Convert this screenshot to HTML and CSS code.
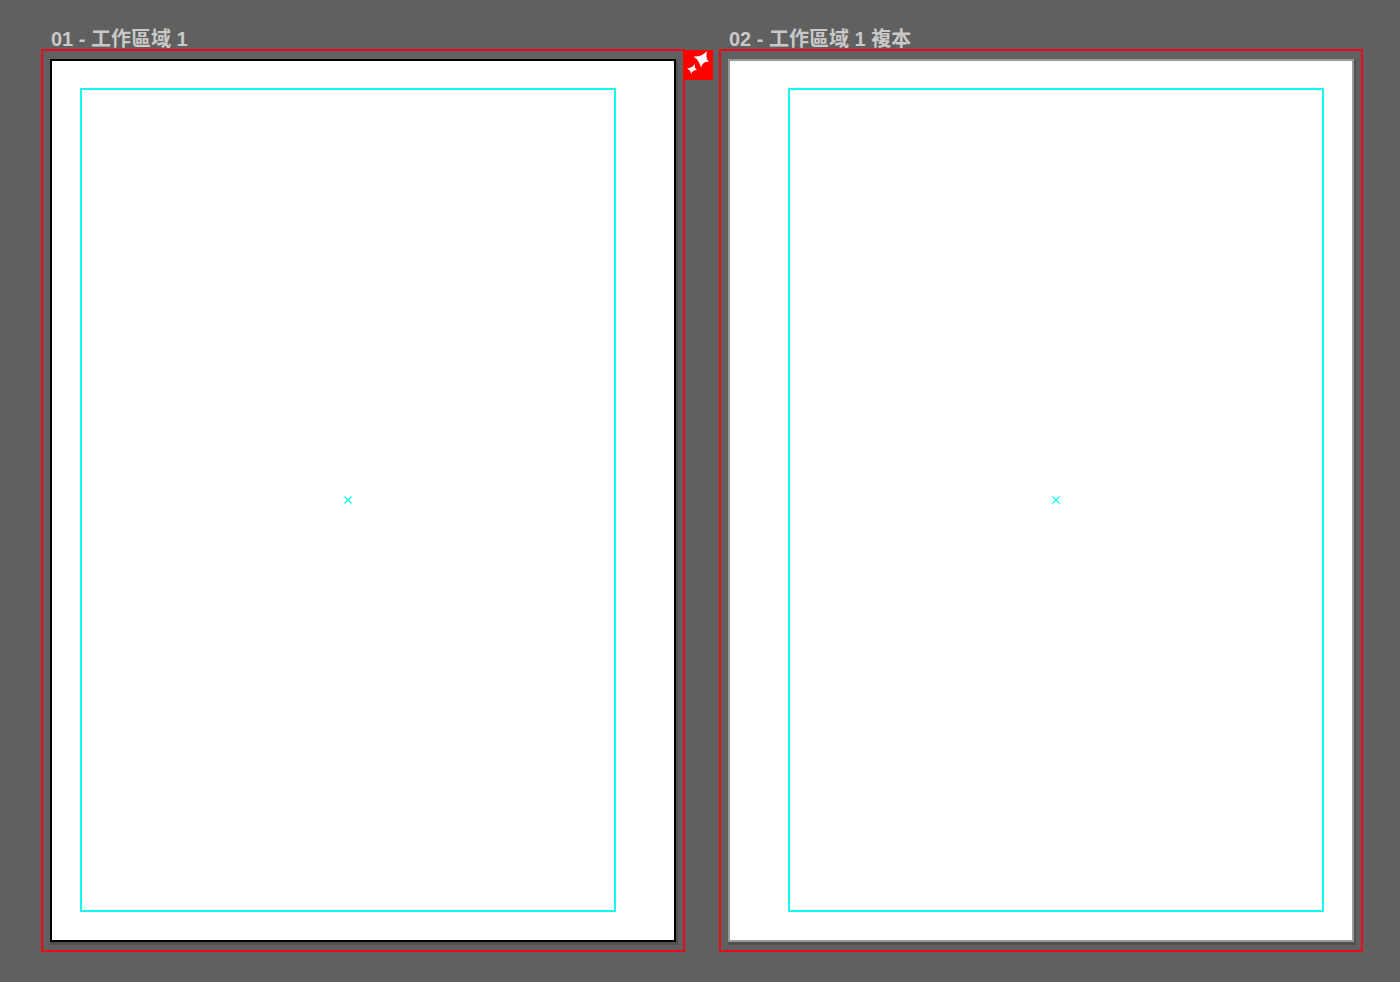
FILE: index.html
```html
<!DOCTYPE html>
<html lang="zh-Hant">
<head>
    <meta charset="UTF-8">
    <title>工作區域</title>
    <link rel="stylesheet" href="styles.css">
</head>
<body>
    <main class="canvas">
        <section class="artboard active">
            <h2>01 - 工作區域 1</h2>
            <div class="bleed">
                <div class="paper">
                    <div class="margin-guide">
                        <svg class="center-mark" viewBox="0 0 8 8"><path d="M0.5 0.5L7.5 7.5M7.5 0.5L0.5 7.5"/></svg>
                    </div>
                </div>
                <button type="button" class="sparkle" aria-label="sparkle">
                    <svg viewBox="0 0 30 30">
                        <path d="M24 1Q22 8 26 12Q20 11 18 17.500Q16 10 10.500 6.500Q19 7 24 1Z"/>
                        <path d="M12 14Q11 18 14 20Q9 20 8 24.500Q8 20 4 18.500Q9 18 12 14Z"/>
                    </svg>
                </button>
            </div>
        </section>

        <section class="artboard copy">
            <h2>02 - 工作區域 1 複本</h2>
            <div class="bleed">
                <div class="paper">
                    <div class="margin-guide">
                        <svg class="center-mark" viewBox="0 0 8 8"><path d="M0.5 0.5L7.5 7.5M7.5 0.5L0.5 7.5"/></svg>
                    </div>
                </div>
            </div>
        </section>
    </main>
</body>
</html>
```
FILE: styles.css
```css
* {
    box-sizing: border-box;
}

body {
    margin: 0;
    background-color: #606060;
    font-family: "Liberation Sans", "Noto Sans CJK TC", sans-serif;
}

.canvas {
    display: grid;
    grid-template-columns: 1fr 1fr;
    gap: 34px;
    min-height: 100vh;
    padding: 29px 37px 30px 41px;
}

.artboard {
    display: flex;
    flex-direction: column;
}

.artboard h2 {
    margin: 0;
    padding-left: 10px;
    color: #c8c8c8;
    font-size: 20px;
    line-height: 20px;
    white-space: nowrap;
}

/* bleed line around the sheet */
.bleed {
    position: relative;
    display: flex;
    flex: 1;
    padding: 8px 7px;
    border: 2px solid #ee0818;
}

.paper {
    display: flex;
    flex: 1;
    background-color: white;
    border: 2px solid #989898;
    box-shadow: 1px 2px 0 1px #505050;
}

.active .paper {
    padding: 27px 58px 28px 28px;
    border-color: black;
}

.copy .paper {
    padding: 27px 28px 28px 58px;
}

.margin-guide {
    display: flex;
    flex: 1;
    align-items: center;
    justify-content: center;
    border: 2px solid #10fcf0;
}

.center-mark {
    width: 8px;
    height: 8px;
    fill: none;
    stroke: #10fcf0;
    stroke-width: 1.4;
}

.sparkle {
    position: absolute;
    top: -1px;
    left: 100%;
    width: 30px;
    height: 30px;
    padding: 0;
    border: none;
    background-color: #ff0000;
    cursor: pointer;
}

.sparkle svg {
    display: block;
    fill: white;
}
```
